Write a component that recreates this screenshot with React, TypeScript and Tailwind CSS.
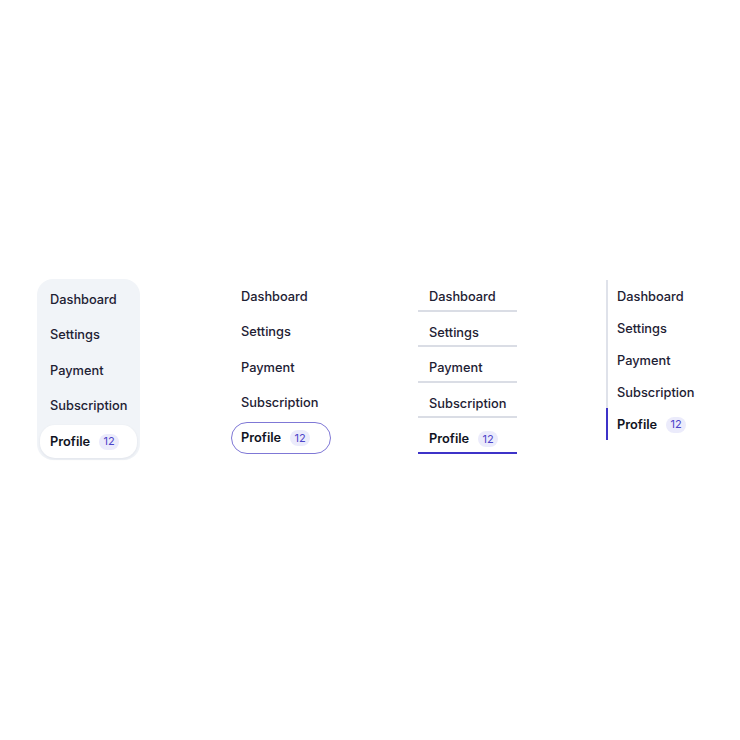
import React from "react";

const items = ["Dashboard", "Settings", "Payment", "Subscription"];

function Badge() {
  return (
    <span className="ml-[9px] inline-flex h-[16px] w-[20px] items-center justify-center rounded-full bg-[#ebebfb] text-[11px] font-normal leading-none text-[#4b44c9]">
      12
    </span>
  );
}

export default function App() {
  return (
    <div
      className="flex h-[740px] w-[740px] items-start bg-white pt-[276px] text-[12.8px] text-[#1e2133]"
      style={{ fontFamily: "Inter, 'Noto Sans', sans-serif" }}
    >
      {/* Panel 1 */}
      <div className="ml-[37px] mt-[3px] flex w-[103px] flex-col gap-[2.5px] rounded-[16px] bg-[#f1f4f8] px-[3px] pb-[2px] pt-[4px]">
        {items.map((t) => (
          <div key={t} className="flex h-[33px] items-center pl-[10px] font-medium">
            {t}
          </div>
        ))}
        <div className="flex h-[33px] items-center rounded-[15px] bg-white pl-[10px] font-semibold text-[#111322] shadow-[0_1px_3px_rgba(20,30,60,0.08)]">
          Profile
          <Badge />
        </div>
      </div>

      {/* Panel 2 */}
      <div className="ml-[91px] mt-[5px] flex w-[100px] flex-col gap-[4.5px]">
        {items.map((t) => (
          <div key={t} className="flex h-[31px] items-center pl-[10px] font-medium">
            {t}
          </div>
        ))}
        <div className="-mt-[1px] flex h-[32px] items-center rounded-full border border-[#7f78d6] pl-[9px] font-semibold text-[#111322]">
          Profile
          <Badge />
        </div>
      </div>

      {/* Panel 3 */}
      <div className="ml-[87px] flex w-[99px] flex-col">
        {items.map((t) => (
          <div
            key={t}
            className="flex h-[35.5px] items-start border-b-2 border-[#dadde5] pl-[11px] pt-[11px] font-medium leading-[20px]"
          >
            {t}
          </div>
        ))}
        <div className="flex h-[35.5px] items-start border-b-2 border-[#3d33c8] pl-[11px] pt-[11px] font-semibold leading-[20px] text-[#111322]">
          <div className="flex h-[20px] items-center">
            Profile
            <Badge />
          </div>
        </div>
      </div>

      {/* Panel 4 */}
      <div className="ml-[89px] mt-[4px] flex w-[97px] flex-col">
        {items.map((t) => (
          <div
            key={t}
            className="flex h-[32px] items-center border-l-2 border-[#dfe2ea] pl-[9px] pt-[1px] font-medium"
          >
            {t}
          </div>
        ))}
        <div className="flex h-[32px] items-center border-l-2 border-[#3d33c8] pl-[9px] pt-[1px] font-semibold text-[#111322]">
          Profile
          <Badge />
        </div>
      </div>
    </div>
  );
}
